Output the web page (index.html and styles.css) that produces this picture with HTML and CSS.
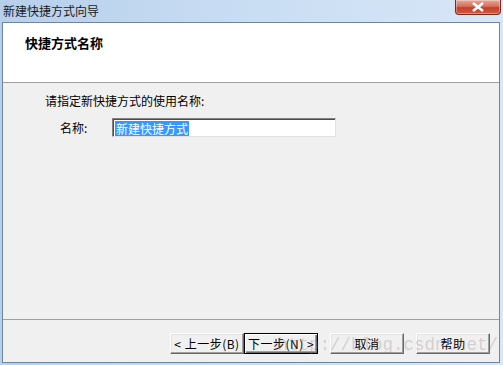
FILE: index.html
```html
<!DOCTYPE html>
<html lang="zh">
<head>
<meta charset="utf-8">
<link rel="stylesheet" href="styles.css">
</head>
<body>
<div class="window">
  <div class="titlebar">
    <span class="title">新建快捷方式向导</span>
    <div class="close"><svg width="14" height="10" viewBox="0 0 14 10"><path d="M2 1 L12 9 M12 1 L2 9" stroke="#fff" stroke-width="2.6" fill="none"/></svg></div>
  </div>
  <div class="client">
    <div class="header">
      <div class="header-title">快捷方式名称</div>
    </div>
    <div class="body">
      <div class="prompt">请指定新快捷方式的使用名称:</div>
      <div class="field">
        <label class="field-label">名称:</label>
        <div class="input"><span class="sel">新建快捷方式</span></div>
      </div>
    </div>
    <div class="footer">
      <div class="btn-pair">
        <button class="btn">&lt; 上一步(B)</button>
        <button class="btn default">下一步(N) &gt;</button>
      </div>
      <button class="btn">取消</button>
      <button class="btn">帮助</button>
    </div>
    <div class="watermark">http://blog.csdn.net/</div>
  </div>
</div>
</body>
</html>
```
FILE: styles.css
```css
* { box-sizing: border-box; }
html, body { margin: 0; padding: 0; }
body {
  width: 503px;
  height: 365px;
  overflow: hidden;
  font-family: "Noto Sans CJK SC", "Liberation Sans", sans-serif;
  font-size: 12px;
  color: #000;
}
.window {
  width: 503px;
  height: 365px;
  display: flex;
  flex-direction: column;
  background: linear-gradient(90deg, #b6cfeb 0%, #c6dbf2 40%, #d8e7f7 100%);
  padding: 0 3px 2px 2px;
}
.titlebar {
  height: 22px;
  display: flex;
  align-items: flex-start;
  justify-content: space-between;
  position: relative;
}
.title {
  font-size: 12px;
  line-height: 20px;
  padding-left: 1px;
  margin-top: 1px;
  color: #1b1b1b;
}
.close {
  width: 46px;
  height: 15px;
  margin-right: -1px;
  border: 1px solid #7a2a22;
  border-top: none;
  border-radius: 0 0 4px 4px;
  background: linear-gradient(180deg, #e8a89a 0%, #d6705c 45%, #c3412b 55%, #cf5a3e 100%);
  display: flex;
  align-items: center;
  justify-content: center;
  box-shadow: inset 0 0 0 1px rgba(255,255,255,0.35);
}
.client {
  flex: 1;
  display: flex;
  flex-direction: column;
  border: 1px solid #6f849f;
  background: #f0f0f0;
  position: relative;
}
.header {
  height: 60px;
  background: #fff;
  border-bottom: 1px solid #a0a0a0;
  padding: 11px 0 0 22px;
}
.header-title {
  font-weight: bold;
  font-size: 13px;
  line-height: 18px;
}
.body {
  flex: 1;
  padding: 10px 0 0 42px;
  border-bottom: 1px solid #a0a0a0;
}
.prompt {
  line-height: 16px;
}
.field {
  display: flex;
  align-items: center;
  margin-top: 9px;
  padding-left: 15px;
}
.field-label {
  width: 52px;
  line-height: 16px;
}
.input {
  width: 224px;
  height: 19px;
  background: #fff;
  border-top: 1px solid #828282;
  border-left: 1px solid #828282;
  border-right: 1px solid #e3e3e3;
  border-bottom: 1px solid #e3e3e3;
  box-shadow: inset 1px 1px 0 #4c4c4c;
  padding: 1px 0 0 2px;
  display: flex;
  align-items: center;
}
.sel {
  background: #3399ff;
  color: #fff;
  line-height: 15px;
  padding: 0 1px;
}
.footer {
  height: 42px;
  display: flex;
  justify-content: flex-end;
  align-items: flex-start;
  padding: 13px 9px 0 0;
  gap: 12px;
}
.btn-pair { display: flex; }
.btn {
  width: 74px;
  height: 21px;
  font-family: inherit;
  font-size: 12px;
  letter-spacing: 0.5px;
  padding: 0;
  margin: 0;
  background: #f0f0f0;
  color: #000;
  border: 1px solid;
  border-color: #fff #696969 #696969 #fff;
  box-shadow: inset -1px -1px 0 #a0a0a0, inset 1px 1px 0 #e3e3e3;
  line-height: 17px;
}
.btn.default {
  border: 1px solid #000;
  box-shadow: inset 1px 1px 0 #fff, inset -1px -1px 0 #696969, inset -2px -2px 0 #a0a0a0;
}
.watermark {
  position: absolute;
  right: 1px;
  bottom: 6px;
  font-family: "Liberation Mono", monospace;
  font-size: 17.5px;
  line-height: 22px;
  color: rgba(120,120,120,0.28);
  pointer-events: none;
}
```
